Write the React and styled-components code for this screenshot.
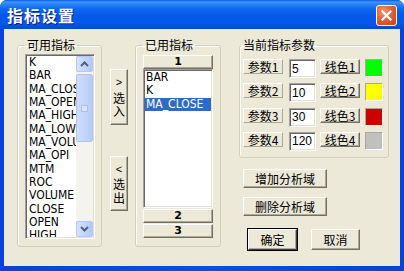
import React from 'react'
import styled, { createGlobalStyle } from 'styled-components'

const GlobalStyle = createGlobalStyle`
    html, body {
        margin: 0;
        padding: 0;
        background: #ffffff;
    }
    body {
        font-family: "Noto Sans CJK SC", sans-serif;
    }
`

const CJK = '"Noto Sans CJK SC", sans-serif'
const LATIN = '"DejaVu Sans Condensed", "Liberation Sans", sans-serif'

const Window = styled.div`
    width: 404px;
    height: 271px;
    box-sizing: border-box;
    display: flex;
    flex-direction: column;
    background: linear-gradient(to right, #0842d8, #0a4ee6 50%, #0842d8);
    border-radius: 7px 7px 0 0;
    overflow: hidden;
`

const TitleBar = styled.div`
    height: 29px;
    flex: none;
    display: flex;
    align-items: center;
    justify-content: space-between;
    padding: 0 7px 0 7px;
    box-sizing: border-box;
    background: linear-gradient(to bottom,
        #0a5ce6 0%, #3d95ff 7%, #2a84fa 14%, #0f68ef 30%,
        #0558ea 55%, #0558e8 80%, #0449d4 100%);
`

const Title = styled.div`
    color: #ffffff;
    font-family: ${CJK};
    font-weight: 700;
    font-size: 16px;
    letter-spacing: 1px;
    text-shadow: 1px 1px 0 #0a1d8a;
    padding-top: 1px;
`

const CloseButton = styled.div`
    width: 21px;
    height: 21px;
    box-sizing: border-box;
    border: 1px solid #ffffff;
    border-radius: 3px;
    background: radial-gradient(circle at 35% 30%, #f09a7c 0%, #e2603a 45%, #c6401a 100%);
    display: flex;
    align-items: center;
    justify-content: center;
    margin-top: 1px;
`

const Frame = styled.div`
    flex: 1;
    padding: 0 4px 5px 4px;
    display: flex;
`

const Body = styled.div`
    flex: 1;
    background: #ece9d8;
    display: flex;
    align-items: flex-start;
    padding: 8px 0 0 13px;
`

const Group = styled.fieldset`
    margin: 0;
    margin-left: ${p => p.$ml || 0}px;
    width: ${p => p.$w}px;
    height: ${p => p.$h}px;
    box-sizing: border-box;
    border: 1px solid #d0d0bf;
    border-radius: 3px;
    box-shadow: inset 1px 1px 0 #ffffff;
    padding: ${p => p.$pad};
    display: flex;
    flex-direction: column;
    align-items: flex-start;
`

const Legend = styled.legend`
    font-family: ${CJK};
    font-size: 12px;
    line-height: 16px;
    color: #000000;
    padding: 0 2px;
`

const Sunken = styled.div`
    box-sizing: border-box;
    background: #ffffff;
    border-style: solid;
    border-width: 1px;
    border-color: #a0a0a0 #ffffff #ffffff #a0a0a0;
    box-shadow: inset 1px 1px 0 #696969, inset -1px -1px 0 #e3e0d0;
`

const ListBox = styled(Sunken)`
    width: ${p => p.$w}px;
    height: ${p => p.$h}px;
    display: flex;
    padding: 1px;
`

const Items = styled.div`
    flex: 1;
    overflow: hidden;
    padding-left: ${p => p.$pl || 1}px;
`

const Item = styled.div`
    font-family: ${LATIN};
    font-size: 12px;
    line-height: 13.35px;
    height: 13.35px;
    white-space: nowrap;
    overflow: hidden;
    color: ${p => (p.$selected ? '#ffffff' : '#000000')};
    background: ${p => (p.$selected ? '#316ac5' : 'transparent')};
    margin-left: ${p => (p.$selected ? -1 : 0)}px;
    padding-left: ${p => (p.$selected ? 1 : 0)}px;
`

const ScrollBar = styled.div`
    width: 17px;
    flex: none;
    display: flex;
    flex-direction: column;
    background: #f4f3ee;
`

const ScrollButton = styled.div`
    height: 16px;
    box-sizing: border-box;
    border: 1px solid #b4c8f6;
    border-radius: 2px;
    background: linear-gradient(to right, #d6e3fd, #c0d3fb 60%, #b2c8f6);
    display: flex;
    align-items: center;
    justify-content: center;
    flex: none;
`

const Thumb = styled.div`
    margin-top: 2px;
    height: 68px;
    box-sizing: border-box;
    border: 1px solid #b0c4f3;
    border-radius: 2px;
    background: linear-gradient(to right, #cfddfd, #c2d4fc 60%, #b8ccf8);
    display: flex;
    align-items: center;
    justify-content: center;
`

const Grip = styled.div`
    width: 5px;
    height: 5px;
    border: 1px solid #aebfe8;
    background: #d8e4fd;
`

const Track = styled.div`
    flex: 1;
`

const raised = `
    box-sizing: border-box;
    background: #ece9d8;
    border-style: solid;
    border-width: 1px;
    border-color: #ffffff #716f64 #716f64 #ffffff;
    box-shadow: inset -1px -1px 0 #aca899;
    color: #000000;
    display: flex;
    align-items: center;
    justify-content: center;
`

const Button = styled.div`
    ${raised}
    width: ${p => p.$w}px;
    height: ${p => p.$h}px;
    margin-left: ${p => p.$ml || 0}px;
    margin-top: ${p => p.$mt || 0}px;
    font-family: ${CJK};
    font-size: 12px;
    flex: none;
`

const DefaultButton = styled(Button)`
    outline: 1px solid #000000;
    outline-offset: 0;
    border-color: #ffffff #404040 #404040 #ffffff;
`

const NumberButton = styled.div`
    ${raised}
    width: 70px;
    height: 14px;
    margin-top: ${p => p.$mt || 0}px;
    font-family: "DejaVu Sans", sans-serif;
    font-weight: 700;
    font-size: 11px;
    line-height: 12px;
`

const MoveColumn = styled.div`
    margin-left: 8px;
    margin-top: 32px;
    display: flex;
    flex-direction: column;
    gap: 31px;
`

const MoveButton = styled.div`
    ${raised}
    width: 18px;
    height: ${p => p.$h}px;
    flex-direction: column;
    font-family: ${CJK};
    font-size: 12px;
    line-height: 13px;
`

const MoveGlyph = styled.span`
    display: block;
    height: 13.5px;
    line-height: 13.5px;
`

const Arrow = styled(MoveGlyph)`
    font-family: "Liberation Sans", sans-serif;
    font-size: 11px;
    margin-bottom: 1px;
`

const RightColumn = styled.div`
    margin-left: 18px;
    display: flex;
    flex-direction: column;
    align-items: flex-start;
`

const ParamRow = styled.div`
    display: flex;
    align-items: flex-start;
    height: 24.3px;
    margin-left: 2px;
`

const ParamLabel = styled.div`
    box-sizing: border-box;
    width: 40px;
    height: 15px;
    border-style: solid;
    border-width: 1px;
    border-color: #ffffff #aca899 #aca899 #ffffff;
    font-family: ${CJK};
    font-size: 12px;
    display: flex;
    align-items: center;
    justify-content: center;
`

const ParamInput = styled(Sunken)`
    width: 27px;
    height: 19px;
    margin-left: 6px;
    padding: 0 0 0 2px;
    font-family: "Liberation Sans", sans-serif;
    font-size: 12px;
    line-height: 16px;
    display: flex;
    align-items: center;
`

const Swatch = styled.div`
    width: 18px;
    height: 18px;
    box-sizing: border-box;
    margin-left: 5px;
    border-style: solid;
    border-width: 1px;
    border-color: #aca899 #ffffff #ffffff #aca899;
    background: ${p => p.$color};
`

const ButtonRow = styled.div`
    display: flex;
    align-items: center;
    margin-left: 9px;
    margin-top: 13px;
    gap: 14px;
`

const available = [
    'K', 'BAR', 'MA_CLOSE', 'MA_OPEN', 'MA_HIGH', 'MA_LOW', 'MA_VOLUME',
    'MA_OPI', 'MTM', 'ROC', 'VOLUME', 'CLOSE', 'OPEN', 'HIGH', 'LOW'
]

const used = ['BAR', 'K', 'MA_CLOSE']

const params = [
    { n: 1, v: '5', color: '#00ff00' },
    { n: 2, v: '10', color: '#ffff00' },
    { n: 3, v: '30', color: '#cc0000' },
    { n: 4, v: '120', color: '#c0c0c0' },
]

const Chevron = ({ up }) => (
    <svg width="9" height="6" viewBox="0 0 9 6">
        <path
            d={up ? 'M1 5 L4.5 1.5 L8 5' : 'M1 1 L4.5 4.5 L8 1'}
            fill="none"
            stroke="#4d6185"
            strokeWidth="2"
        />
    </svg>
)

export default function App() {
    return (
        <>
            <GlobalStyle />
            <Window>
                <TitleBar>
                    <Title>指标设置</Title>
                    <CloseButton>
                        <svg width="11" height="11" viewBox="0 0 11 11">
                            <path d="M1.5 1.5 L9.5 9.5 M9.5 1.5 L1.5 9.5" stroke="#ffffff" strokeWidth="2.2" strokeLinecap="square" />
                        </svg>
                    </CloseButton>
                </TitleBar>
                <Frame>
                    <Body>
                        <Group $w={85} $h={210} $pad="1px 6px 0 7px">
                            <Legend>可用指标</Legend>
                            <ListBox $w={70} $h={185}>
                                <Items $pl={2}>
                                    {available.map(name => <Item key={name}>{name}</Item>)}
                                </Items>
                                <ScrollBar>
                                    <ScrollButton><Chevron up /></ScrollButton>
                                    <Thumb><Grip /></Thumb>
                                    <Track />
                                    <ScrollButton><Chevron /></ScrollButton>
                                </ScrollBar>
                            </ListBox>
                        </Group>

                        <MoveColumn>
                            <MoveButton $h={56}>
                                <Arrow>&gt;</Arrow>
                                <MoveGlyph>选</MoveGlyph>
                                <MoveGlyph>入</MoveGlyph>
                            </MoveButton>
                            <MoveButton $h={55}>
                                <Arrow>&lt;</Arrow>
                                <MoveGlyph>选</MoveGlyph>
                                <MoveGlyph>出</MoveGlyph>
                            </MoveButton>
                        </MoveColumn>

                        <Group $ml={7} $w={86} $h={210} $pad="2px 6px 0 7px">
                            <Legend>已用指标</Legend>
                            <NumberButton>1</NumberButton>
                            <ListBox $w={70} $h={139}>
                                <Items>
                                    {used.map(name => (
                                        <Item key={name} $selected={name === 'MA_CLOSE'}>{name}</Item>
                                    ))}
                                </Items>
                            </ListBox>
                            <NumberButton $mt={1}>2</NumberButton>
                            <NumberButton $mt={1}>3</NumberButton>
                        </Group>

                        <RightColumn>
                            <Group $w={150} $h={121} $pad="6px 0 0 1px">
                                <Legend>当前指标参数</Legend>
                                {params.map(p => (
                                    <ParamRow key={p.n}>
                                        <ParamLabel>参数{p.n}</ParamLabel>
                                        <ParamInput>{p.v}</ParamInput>
                                        <Button $w={40} $h={15} $ml={4}>线色{p.n}</Button>
                                        <Swatch $color={p.color} />
                                    </ParamRow>
                                ))}
                            </Group>
                            <Button $w={84} $h={19} $ml={4} $mt={11}>增加分析域</Button>
                            <Button $w={84} $h={19} $ml={4} $mt={9}>删除分析域</Button>
                            <ButtonRow>
                                <DefaultButton $w={49} $h={21}>确定</DefaultButton>
                                <Button $w={49} $h={21}>取消</Button>
                            </ButtonRow>
                        </RightColumn>
                    </Body>
                </Frame>
            </Window>
        </>
    )
}
